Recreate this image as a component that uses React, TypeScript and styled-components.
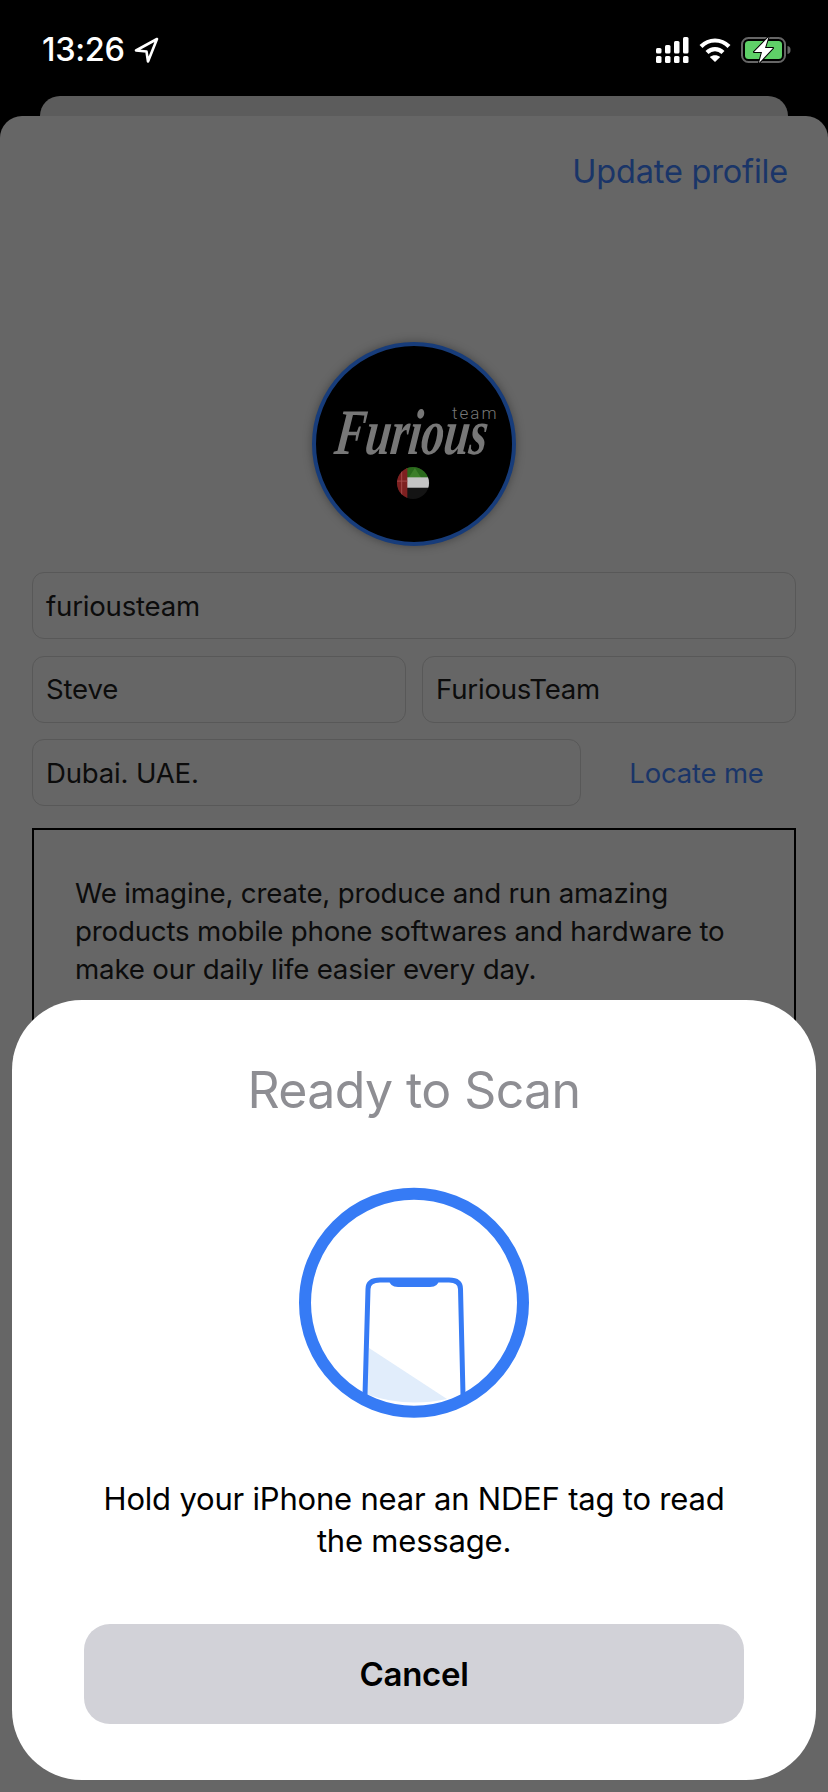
import React from "react";
import styled, { createGlobalStyle } from "styled-components";

const Global = createGlobalStyle`
  html, body { margin: 0; padding: 0; background: #000; }
  * { box-sizing: border-box; }
  body { font-family: Inter, "Liberation Sans", sans-serif; }
`;
const Screen = styled.div`
  position: relative; width: 828px; height: 1792px; overflow: hidden;
  background: #000; display: flex; flex-direction: column;
`;
const StatusBar = styled.div`
  height: 96px; flex: none; display: flex; justify-content: space-between; align-items: flex-start;
  padding: 30px 34px 0 42px; color: #fff;
`;
const TimeGroup = styled.div`display: flex; align-items: center; gap: 9px;`;
const Time = styled.span`font: 500 32.5px/40px Inter, sans-serif; letter-spacing: -0.3px;`;
const StatusIcons = styled.div`display: flex; align-items: center; gap: 10px; height: 40px;`;
const BackCard = styled.div`
  flex: none; height: 20px; margin: 0 40px; background: #5c5c5c; border-radius: 20px 20px 0 0;
`;
const FrontCard = styled.div`
  flex: 1; background: #666; border-radius: 22px 22px 0 0; padding: 36px 32px 0;
  display: flex; flex-direction: column;
`;
const Header = styled.div`display: flex; justify-content: flex-end; padding-right: 8px;`;
const LinkText = styled.span`font: 400 32.5px/40px Inter, sans-serif; color: #1a3568; letter-spacing: -0.2px;`;
const SmallLink = styled.span`font: 400 27.5px/40px Inter, sans-serif; color: #1a3568; letter-spacing: -0.2px;`;
const AvatarRow = styled.div`display: flex; justify-content: center; margin-top: 150px;`;
const Avatar = styled.div`
  position: relative; width: 204px; height: 204px; border-radius: 50%; background: #000;
  border: 4px solid #173c7a; box-shadow: 0 0 10px rgba(0,0,0,.35);
`;
const Brand = styled.span`
  position: absolute; left: 20px; top: 56px; font: italic 700 60px/60px "Liberation Serif", serif;
  color: #777; transform: scale(.76, 1.08) skewX(-10deg); transform-origin: left center; white-space: nowrap;
`;
const Team = styled.span`
  position: absolute; left: 136px; top: 57px; font: 300 17px/20px Roboto, sans-serif; color: #777; letter-spacing: 2px;
`;
const FlagWrap = styled.div`position: absolute; left: 80px; top: 120px; width: 36px; height: 36px; display: flex;`;
const Form = styled.div`display: flex; flex-direction: column; gap: 16.5px; margin-top: 26px;`;
const Row = styled.div`display: flex; gap: 16px; align-items: center;`;
const Field = styled.div<{ $w?: number }>`
  flex: ${p => (p.$w ? `0 0 ${p.$w}px` : "1 1 0")}; height: 67px; border: 1.5px solid #585858; border-radius: 12px;
  padding: 0 13px; display: flex; align-items: center; font: 400 27.6px/36px Inter, sans-serif; color: #0c0c0c; letter-spacing: -0.2px;
`;
const LocateSlot = styled.div`flex: 1; display: flex; justify-content: center;`;
const Bio = styled.div`
  margin-top: 22px; height: 500px; border: 2px solid #000; padding: 44px 40px 0 41px;
  font: 400 27.7px/38px Inter, sans-serif; color: #0c0c0c; letter-spacing: -0.2px;
`;
const Sheet = styled.div`
  position: absolute; left: 12px; right: 12px; bottom: 12px; height: 780px; background: #fff; border-radius: 70px;
  display: flex; flex-direction: column; align-items: center; padding-top: 60px;
`;
const Title = styled.div`font: 400 50px/60px Inter, sans-serif; color: #8e8e93; letter-spacing: -0.6px;`;
const ScanIcon = styled.svg`display: block; margin-top: 50px; flex: none;`;
const Message = styled.div`
  margin-top: 48px; width: 640px; text-align: center; font: 400 31px/42px Inter, sans-serif; color: #000; letter-spacing: -0.2px;
`;
const CancelButton = styled.button`
  margin-top: 62px; width: 660px; height: 100px; border: 0; border-radius: 26px; background: #d2d2d8;
  font: 600 33px/40px Inter, sans-serif; color: #000; letter-spacing: -0.3px;
`;

export default function App() {
  return (
    <Screen>
      <Global />
      <StatusBar>
        <TimeGroup>
          <Time>13:26</Time>
          <svg width="25" height="26" viewBox="0 0 25 26">
            <path d="M23 2 L2 13.5 L12.5 14.5 L14 24.5 Z" fill="none" stroke="#fff" strokeWidth="2.6" strokeLinejoin="round" />
          </svg>
        </TimeGroup>
        <StatusIcons>
          <svg width="33" height="26" viewBox="0 0 33 26" fill="#fff">
            <rect x="0" y="11" width="5.5" height="5.5" rx="1.5" /><rect x="9" y="8" width="5.5" height="8.5" rx="1.5" />
            <rect x="18" y="4" width="5.5" height="12.5" rx="1.5" /><rect x="27" y="0" width="5.5" height="16.5" rx="1.5" />
            <rect x="0" y="19" width="5.5" height="7" rx="1.5" /><rect x="9" y="19" width="5.5" height="7" rx="1.5" />
            <rect x="18" y="19" width="5.5" height="7" rx="1.5" /><rect x="27" y="19" width="5.5" height="7" rx="1.5" />
          </svg>
          <svg width="32" height="26" viewBox="0 0 32 26" fill="none" stroke="#fff" strokeWidth="4.2">
            <path d="M2 9.5 C10 1.5 22 1.5 30 9.5" /><path d="M8 15.5 C12.5 11 19.5 11 24 15.5" />
            <path d="M16 25 L10.8 20 C13.8 17.5 18.2 17.5 21.2 20 Z" fill="#fff" stroke="none" />
          </svg>
          <svg width="53" height="30" viewBox="0 0 53 30">
            <rect x="1" y="3" width="43" height="24" rx="6.5" fill="none" stroke="#666" strokeWidth="2" />
            <rect x="4" y="6" width="37" height="18" rx="3.5" fill="#5fd068" />
            <path d="M46.5 11 C49 11.5 49.5 13 49.5 15 C49.5 17 49 18.5 46.5 19 Z" fill="#666" />
            <path d="M27.5 2 L13 17 L21 17 L18 28 L32 13 L24 13 Z" fill="#fff" stroke="#000" strokeWidth="2" strokeLinejoin="round" paintOrder="stroke" />
          </svg>
        </StatusIcons>
      </StatusBar>
      <BackCard />
      <FrontCard>
        <Header><LinkText>Update profile</LinkText></Header>
        <AvatarRow>
          <Avatar>
            <Brand>Furious</Brand>
            <Team>team</Team>
            <FlagWrap>
              <svg width="34" height="34" viewBox="0 0 36 36">
                <defs><clipPath id="globe"><circle cx="18" cy="18" r="17" /></clipPath></defs>
                <g clipPath="url(#globe)">
                  <rect width="36" height="36" fill="#141414" />
                  <rect x="10" y="0" width="26" height="13" fill="#2a6a1c" />
                  <path d="M13 13 L20 2 L27 13 Z" fill="#3d7f2a" />
                  <rect x="10" y="12" width="26" height="11" fill="#c4c4c4" />
                  <path d="M0 0 H12 L12 34 H0 Z" fill="#7e2020" />
                  <path d="M0 16 H12 M6 0 V36" stroke="#a64a4a" strokeWidth="1" />
                </g>
              </svg>
            </FlagWrap>
          </Avatar>
        </AvatarRow>
        <Form>
          <Row><Field>furiousteam</Field></Row>
          <Row><Field>Steve</Field><Field>FuriousTeam</Field></Row>
          <Row>
            <Field $w={549}>Dubai. UAE.</Field>
            <LocateSlot><SmallLink>Locate me</SmallLink></LocateSlot>
          </Row>
        </Form>
        <Bio>We imagine, create, produce and run amazing products mobile phone softwares and hardware to make our daily life easier every day.</Bio>
      </FrontCard>
      <Sheet>
        <Title>Ready to Scan</Title>
        <ScanIcon width="270" height="260" viewBox="-1 0 270 260">
          <path d="M89 178 L167 229 Q125 238 86 224 Z" fill="#e1edfb" />
          <circle cx="134" cy="132.7" r="109" fill="none" stroke="#367bf5" strokeWidth="12" />
          <path d="M85 225 L88 119 Q88 110 100 110 H169 Q180.5 110 180.5 119 L183 225" fill="none" stroke="#367bf5" strokeWidth="5" />
          <path d="M109 109 H159 Q158.5 117 150 117 H118 Q109.5 117 109 109 Z" fill="#367bf5" />
        </ScanIcon>
        <Message>Hold your iPhone near an NDEF tag to read the message.</Message>
        <CancelButton>Cancel</CancelButton>
      </Sheet>
    </Screen>
  );
}
